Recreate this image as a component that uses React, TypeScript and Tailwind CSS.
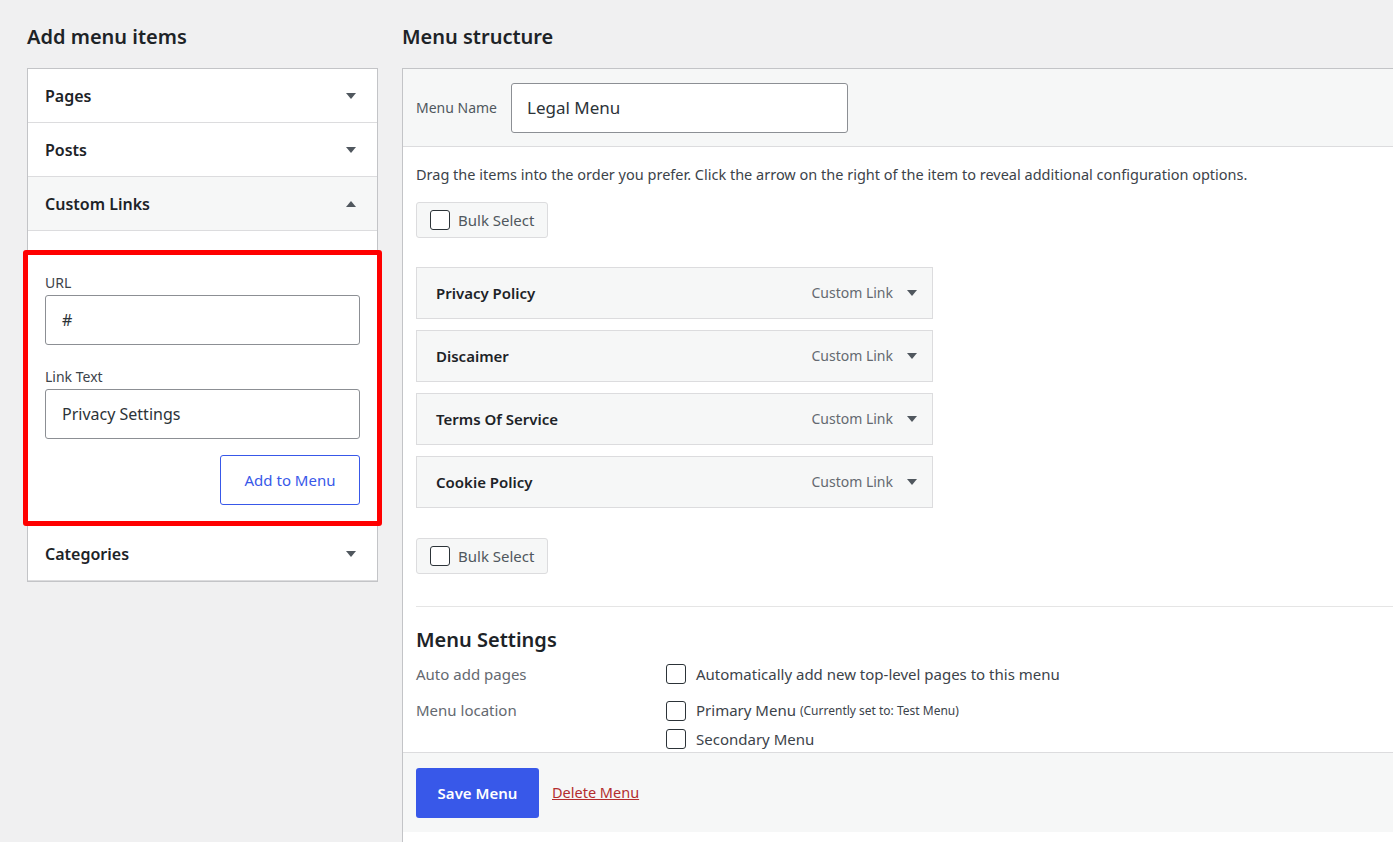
import React from "react";

const F = { fontFamily: '"Noto Sans", "Open Sans", sans-serif' };

function Caret({ up }: { up?: boolean }) {
  return (
    <svg width="10" height="6" viewBox="0 0 10 6" className={up ? "rotate-180" : ""}>
      <path d="M0 0h10L5 6z" fill="#50575e" />
    </svg>
  );
}

function Box() {
  return <span className="inline-block w-[20px] h-[20px] border border-[#2c3338] rounded-[3px] bg-white shrink-0" />;
}

function AccRow({ label, up, gray }: { label: string; up?: boolean; gray?: boolean }) {
  return (
    <div className={`h-[54px] flex items-center justify-between pl-[17px] pr-[21px] border-b border-[#dcdcde] ${gray ? "bg-[#f6f7f7]" : "bg-white"}`}>
      <span className="text-[16px] font-semibold text-[#1d2327]">{label}</span>
      <Caret up={up} />
    </div>
  );
}

function Bulk() {
  return (
    <div className="inline-flex items-center gap-2 h-[36px] px-[13px] border border-[#dcdcde] rounded-[3px] bg-[#f6f7f7] text-[15px] text-[#50575e]">
      <Box />
      Bulk Select
    </div>
  );
}

function Item({ t }: { t: string }) {
  return (
    <div className="w-[517px] h-[52px] flex items-center justify-between pl-[19px] pr-[15px] bg-[#f6f7f7] border border-[#dcdcde]">
      <span className="text-[15px] font-semibold text-[#1d2327]">{t}</span>
      <span className="flex items-center gap-[14px] text-[14px] text-[#646970]">
        Custom Link <Caret />
      </span>
    </div>
  );
}

export default function App() {
  return (
    <div style={F} className="bg-[#f0f0f1] w-[1393px] h-[842px] overflow-hidden flex gap-[24px] pl-[27px] pt-[22px]">
      <div className="w-[351px] shrink-0">
        <h2 className="text-[20px] font-semibold text-[#1d2327] h-[46px]">Add menu items</h2>
        <div className="border border-[#c3c4c7] bg-white">
          <AccRow label="Pages" />
          <AccRow label="Posts" />
          <AccRow label="Custom Links" up gray />
          <div className="pt-[19px] pb-[1px] bg-white">
            <div className="-mx-[5px] border-[5px] border-[#ff0000] rounded-[3px] px-[17px] pt-[17px] pb-[16px]">
              <div className="text-[14px] text-[#3c434a] mb-[2px]">URL</div>
              <div className="h-[50px] border border-[#8c8f94] rounded-[3px] flex items-center px-[16px] text-[16px] text-[#2c3338]">#</div>
              <div className="text-[14px] text-[#3c434a] mt-[21px] mb-[2px]">Link Text</div>
              <div className="h-[50px] border border-[#8c8f94] rounded-[3px] flex items-center px-[16px] text-[16px] text-[#2c3338]">Privacy Settings</div>
              <div className="flex justify-end mt-[16px]">
                <div className="w-[140px] h-[50px] border border-[#3858e9] rounded-[3px] flex items-center justify-center text-[15px] text-[#3858e9]">Add to Menu</div>
              </div>
            </div>
          </div>
          <AccRow label="Categories" />
        </div>
      </div>

      <div className="flex-1">
        <h2 className="text-[20px] font-semibold text-[#1d2327] h-[46px]">Menu structure</h2>
        <div className="border border-[#c3c4c7] border-r-0 bg-white h-[800px]">
          <div className="h-[78px] bg-[#f6f7f7] border-b border-[#dcdcde] flex items-center pl-[13px] gap-[14px]">
            <span className="text-[14px] text-[#50575e]">Menu Name</span>
            <div className="w-[337px] h-[50px] bg-white border border-[#8c8f94] rounded-[3px] flex items-center px-[15px] text-[17px] text-[#2c3338]">Legal Menu</div>
          </div>
          <div className="pl-[13px] pt-[17px]">
            <p className="text-[14.5px] text-[#3c434a]">Drag the items into the order you prefer. Click the arrow on the right of the item to reveal additional configuration options.</p>
            <div className="mt-[16px]"><Bulk /></div>
            <div className="mt-[29px] flex flex-col gap-[11px]">
              <Item t="Privacy Policy" />
              <Item t="Discaimer" />
              <Item t="Terms Of Service" />
              <Item t="Cookie Policy" />
            </div>
            <div className="mt-[30px]"><Bulk /></div>
            <div className="mt-[32px] border-t border-[#e5e5e5] pt-[18px]">
              <h3 className="text-[20px] font-semibold text-[#1d2327]">Menu Settings</h3>
              <div className="flex mt-[8px] text-[15px]">
                <span className="w-[250px] text-[#646970]">Auto add pages</span>
                <span className="flex items-center gap-[10px] text-[#3c434a]"><Box />Automatically add new top-level pages to this menu</span>
              </div>
              <div className="flex mt-[14px] text-[15px]">
                <span className="w-[250px] text-[#646970]">Menu location</span>
                <div className="flex flex-col gap-[6px]">
                  <span className="flex items-center gap-[10px] text-[#3c434a]"><Box />Primary Menu <span className="text-[12px] -ml-[6px]">(Currently set to: Test Menu)</span></span>
                  <span className="flex items-center gap-[10px] text-[#3c434a]"><Box />Secondary Menu</span>
                </div>
              </div>
            </div>
          </div>
          <div className="mt-[2px] h-[80px] bg-[#f6f7f7] border-t border-[#dcdcde] flex items-center pl-[13px] gap-[13px]">
            <div className="w-[123px] h-[50px] bg-[#3858e9] rounded-[3px] flex items-center justify-center text-white text-[15px] font-semibold">Save Menu</div>
            <span className="text-[14.5px] text-[#b32d2e] underline">Delete Menu</span>
          </div>
        </div>
      </div>
    </div>
  );
}
